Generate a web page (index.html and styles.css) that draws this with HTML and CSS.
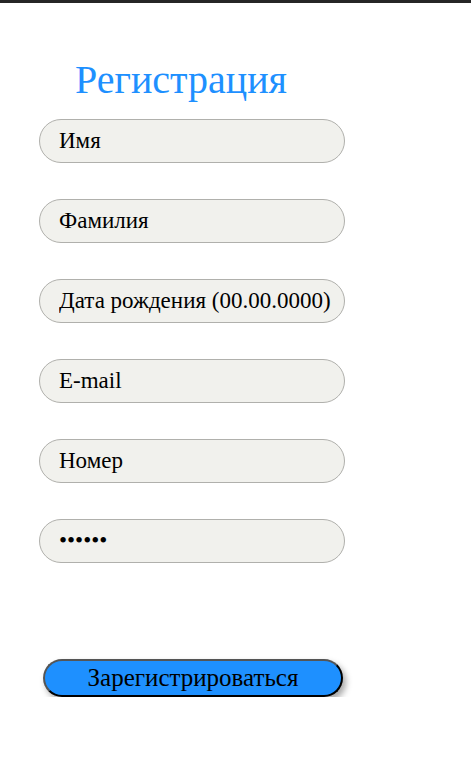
FILE: index.html
```html
<!DOCTYPE html>
<html lang="ru">
<head>
<meta charset="utf-8">
<title>Регистрация</title>
<link rel="stylesheet" href="styles.css">
</head>
<body>
<div class="topbar"></div>
<main class="page">
  <h1 class="title">Регистрация</h1>
  <form class="form">
    <input class="field" type="text" value="Имя">
    <input class="field" type="text" value="Фамилия">
    <input class="field" type="text" value="Дата рождения (00.00.0000)">
    <input class="field" type="text" value="E-mail">
    <input class="field" type="text" value="Номер">
    <input class="field" type="password" value="123456">
    <button class="submit" type="button">Зарегистрироваться</button>
  </form>
</main>
</body>
</html>
```

FILE: styles.css
```css
html, body {
  margin: 0;
  padding: 0;
  background: #ffffff;
}
body {
  font-family: "Liberation Serif", "DejaVu Serif", serif;
}
.topbar {
  height: 3px;
  background: #262626;
}
.page {
  padding: 0 0 0 39px;
}
.title {
  margin: 55px 0 0 36px;
  font-weight: normal;
  font-size: 40px;
  line-height: 44px;
  color: #1e90ff;
}
.form {
  display: flex;
  flex-direction: column;
  align-items: flex-start;
  gap: 36px;
  margin-top: 17px;
}
.field {
  box-sizing: border-box;
  width: 306px;
  height: 44px;
  padding: 0 0 0 19px;
  border: 1px solid #b0b0ac;
  border-radius: 22px;
  background: #f1f1ed;
  font-family: "Liberation Serif", "DejaVu Serif", serif;
  font-size: 23px;
  color: #000;
  outline: none;
}
.submit {
  box-sizing: border-box;
  margin: 60px 0 0 4px;
  width: 300px;
  height: 38px;
  border: 2px outset #555;
  border-radius: 20px;
  background: #1e90ff;
  box-shadow: 3px 4px 6px rgba(0,0,0,0.35);
  font-family: "Liberation Serif", "DejaVu Serif", serif;
  font-size: 25px;
  color: #000;
  padding: 0;
}
```
